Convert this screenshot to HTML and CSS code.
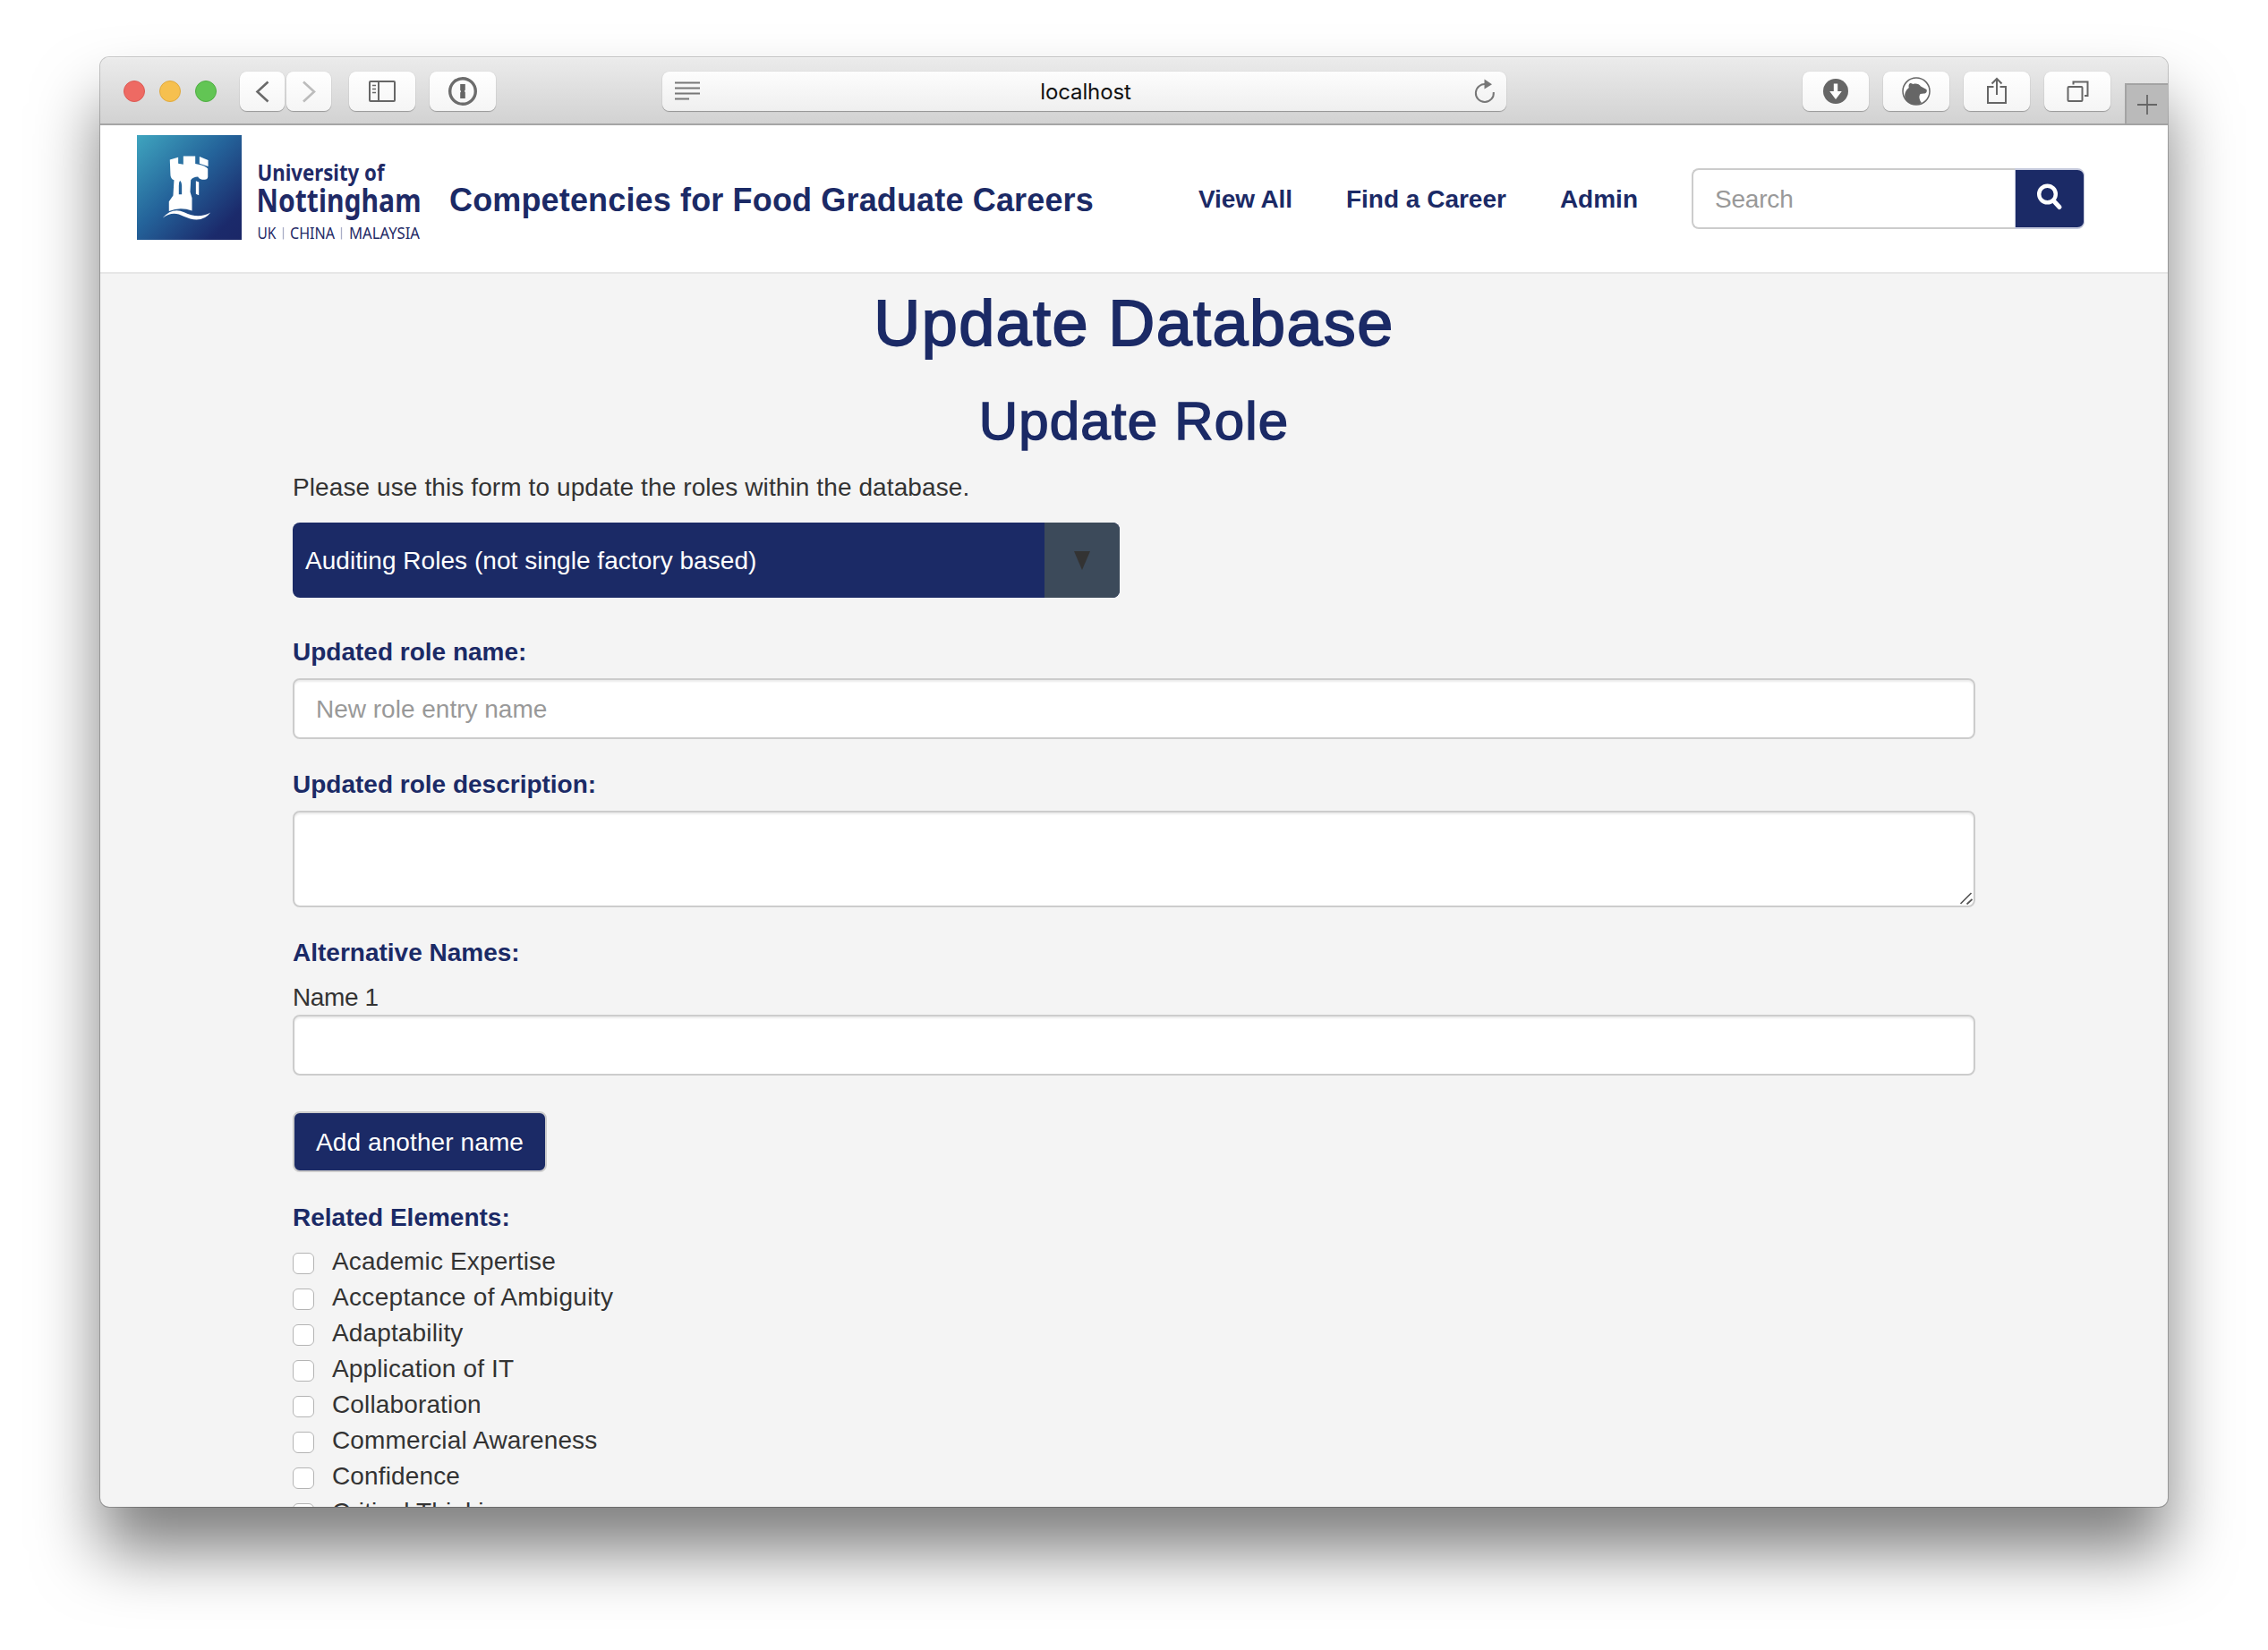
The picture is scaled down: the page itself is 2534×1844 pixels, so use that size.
FILE: index.html
```html
<!DOCTYPE html>
<html lang="en">
<head>
<meta charset="utf-8">
<title>Update Database</title>
<link rel="stylesheet" href="styles.css">
</head>
<body>
<div class="window">
  <div class="toolbar">
    <div class="lights"><span class="light red"></span><span class="light yellow"></span><span class="light green"></span></div>
    <div class="history">
      <span class="tool half"><svg width="50" height="44" viewBox="0 0 50 44"><path d="M31.500 11.500L19.500 22.500L31.500 33.500" fill="none" stroke="#6a6a6a" stroke-width="2.600"/></svg></span>
      <span class="tool half"><svg width="50" height="44" viewBox="0 0 50 44"><path d="M19 11.500L31 22.500L19 33.500" fill="none" stroke="#bcbcbc" stroke-width="2.600"/></svg></span>
    </div>
    <span class="tool sidebar"><svg width="74" height="44" viewBox="0 0 74 44" fill="none" stroke="#666" stroke-width="2"><rect x="23" y="11" width="28" height="22" rx="1"/><path d="M33 11V33"/><path d="M26 15.500h4M26 19.500h4M26 23.500h4" stroke-width="1.300"/></svg></span>
    <span class="tool onepass"><svg width="74" height="44" viewBox="0 0 74 44"><circle cx="37" cy="22" r="14.300" fill="none" stroke="#6c6c6c" stroke-width="3.400"/><path d="M34.200 14h5.600v6.500l-1 1.500l1 1v7h-5.600v-6.500l1-1.500l-1-1z" fill="#666"/></svg></span>
    <div class="address">
      <svg width="30" height="22" viewBox="0 0 30 22"><path d="M0 1.500h28M0 7.500h28M0 13.500h28M0 19.500h16" stroke="#777" stroke-width="2"/></svg>
      <span class="host">localhost</span>
      <svg width="24" height="28" viewBox="0 0 24 28"><path d="M13.500 6.200A10 10 0 1 0 21.800 15" fill="none" stroke="#777" stroke-width="2"/><path d="M11.500 0.500L20 6.200L11.500 11.500z" fill="#777"/></svg>
    </div>
    <div class="actions">
      <span class="tool"><svg width="74" height="44" viewBox="0 0 74 44"><circle cx="37" cy="22" r="14" fill="#666"/><path d="M34.800 13.500h4.400v8.500h4.600L37 31l-6.800-9h4.600z" fill="#fff"/></svg></span>
      <span class="tool"><svg width="74" height="44" viewBox="0 0 74 44"><circle cx="37" cy="22" r="15" fill="#fff" stroke="#666" stroke-width="1.500"/><path d="M25.500 31.500C22.500 26 25 21 28.800 18C28 15 29.300 12.500 31 13L33.500 14C37 13 40.500 14 42 16.500L48.500 20C49.500 22.500 48 24.500 45.500 24.500L41.500 25C39.500 28 40.500 31.500 43 35C37 38.500 29 37 25.500 31.500z" fill="#666"/></svg></span>
      <span class="tool"><svg width="74" height="44" viewBox="0 0 74 44" fill="none" stroke="#666" stroke-width="2"><path d="M33.500 17H27v18H47V17H40.500M37 26V8M31.500 13.500L37 8L42.500 13.500"/></svg></span>
      <span class="tool"><svg width="74" height="44" viewBox="0 0 74 44" fill="none" stroke="#666" stroke-width="2"><rect x="26.500" y="17" width="16" height="16" rx="1"/><path d="M32.500 14.500V11.500H48.500V27H45"/></svg></span>
    </div>
    <span class="newtab"><svg width="24" height="24" viewBox="0 0 24 24"><path d="M12 1V23M1 12H23" stroke="#666" stroke-width="1.800"/></svg></span>
  </div>

  <header class="navbar">
    <svg class="logo" width="320" height="126" viewBox="0 0 320 126">
      <defs>
        <linearGradient id="sky" x1="0" y1="0" x2="1" y2="1"><stop offset="0" stop-color="#3fa5bf"/><stop offset=".45" stop-color="#24639a"/><stop offset=".85" stop-color="#1b2a6b"/><stop offset="1" stop-color="#1b2767"/></linearGradient>
      </defs>
      <rect width="117" height="117" fill="url(#sky)"/>
      <g transform="scale(.3343)" fill="#fff">
        <path fill-rule="evenodd" d="M110 82L138 74V95L155 98V70H195V96L209 99Q228 103 237 112V140Q236 149 226 149Q208 149 204 139Q188 139 180 150L178 190L184 210V253Q145 238 107 254V222L121 202L124 150Q112 146 112 132zM144 152Q139 158 140 170V198H150V168Q150 158 144 152z"/>
        <path d="M209 72L238 84V105L209 95z"/>
        <path d="M197 153L207 157V201L197 197z"/>
        <path d="M86 277Q118 240 158 258Q205 282 246 259Q222 291 178 280Q158 273 140 265Q112 257 86 277z"/>
      </g>
      <g fill="#1f2a66" font-family="'Noto Sans', sans-serif" letter-spacing="0">
        <text x="134.500" y="50.500" font-size="25" font-weight="700" textLength="142" lengthAdjust="spacingAndGlyphs">University of</text>
        <text x="133.500" y="86" font-size="36" font-weight="700" textLength="184" lengthAdjust="spacingAndGlyphs">Nottingham</text>
        <g font-size="18" font-weight="400">
          <text x="134.500" y="116" textLength="21" lengthAdjust="spacingAndGlyphs">UK</text>
          <text x="171" y="116" textLength="50" lengthAdjust="spacingAndGlyphs">CHINA</text>
          <text x="237" y="116" textLength="79" lengthAdjust="spacingAndGlyphs">MALAYSIA</text>
        </g>
        <path d="M163.500 103v13.500M228.500 103v13.500" stroke="#a9adc6" stroke-width="1.300"/>
      </g>
    </svg>
    <div class="brand">Competencies for Food Graduate Careers</div>
    <nav class="links"><a>View All</a><a>Find a Career</a><a>Admin</a></nav>
    <div class="search">
      <div class="search-field">Search</div>
      <div class="search-button"><svg width="30" height="32" viewBox="0 0 30 32" fill="none" stroke="#fff"><circle cx="12.500" cy="13" r="9.300" stroke-width="4.400"/><path d="M19.500 20.500L26 27.500" stroke-width="5" stroke-linecap="round"/></svg></div>
    </div>
  </header>

  <main class="page">
    <h1>Update Database</h1>
    <h2>Update Role</h2>
    <p class="intro">Please use this form to update the roles within the database.</p>
    <div class="select"><span class="select-value">Auditing Roles (not single factory based)</span><span class="select-arrow"><svg width="18" height="21" viewBox="0 0 18 21"><path d="M0 0H18L9 21z" fill="#333"/></svg></span></div>

    <div class="group"><div class="label">Updated role name:</div><div class="field">New role entry name</div></div>
    <div class="group"><div class="label">Updated role description:</div><div class="field area"><svg width="16" height="16" viewBox="0 0 16 16"><path d="M1.500 14L13.500 2M8.500 14.500L14.500 9" stroke="#555" stroke-width="1.700"/></svg></div></div>
    <div class="group names"><div class="label">Alternative Names:</div><div class="caption">Name 1</div><div class="field"></div></div>
    <div class="button">Add another name</div>
    <div class="label">Related Elements:</div>
    <ul class="elements">
      <li><span class="box"></span>Academic Expertise</li>
      <li><span class="box"></span>Acceptance of Ambiguity</li>
      <li><span class="box"></span>Adaptability</li>
      <li><span class="box"></span>Application of IT</li>
      <li><span class="box"></span>Collaboration</li>
      <li><span class="box"></span>Commercial Awareness</li>
      <li><span class="box"></span>Confidence</li>
      <li><span class="box"></span>Critical Thinking</li>
    </ul>
  </main>
</div>
</body>
</html>
```
FILE: styles.css
```css
* { box-sizing: border-box; }
html, body { height: 100%; }
body {
  margin: 0;
  padding: 64px 112px 160px;
  background: #fff;
  overflow: hidden;
  color: #333;
  font: 28px/40px "Liberation Sans", Arial, sans-serif;
  letter-spacing: .1px;
}
svg { display: block; flex: none; }
.window {
  height: 1620px;
  display: flex;
  flex-direction: column;
  overflow: hidden;
  border-radius: 10px;
  background: #f4f4f4;
  box-shadow: 0 0 0 1px rgba(0, 0, 0, .22), 0 50px 72px rgba(0, 0, 0, .5);
}

/* browser toolbar */
.toolbar {
  flex: none;
  height: 76px;
  display: flex;
  align-items: center;
  padding-left: 26px;
  background: linear-gradient(#ebebeb, #d2d2d2);
  border-top: 1px solid #f5f5f5;
  border-bottom: 2px solid #a5a5a5;
}
.lights { display: flex; gap: 16px; }
.light { width: 24px; height: 24px; border-radius: 50%; }
.red { background: #ee6a63; border: 1px solid #dc5a54; }
.yellow { background: #f6c04f; border: 1px solid #e0aa3e; }
.green { background: #62c554; border: 1px solid #4fae43; }
.history { display: flex; gap: 2px; margin-left: 26px; }
.tool {
  width: 74px;
  height: 44px;
  border-radius: 8px;
  background: linear-gradient(#fff, #f5f5f5);
  box-shadow: 0 1px 1px rgba(0, 0, 0, .28), 0 0 1px rgba(0, 0, 0, .2);
}
.half { width: 50px; }
.sidebar { margin-left: 20px; }
.onepass { margin-left: 16px; }
.address {
  width: 943px;
  height: 44px;
  margin-left: 186px;
  padding: 0 12px 0 14px;
  display: flex;
  align-items: center;
  justify-content: space-between;
  border-radius: 8px;
  background: linear-gradient(#fdfdfd, #efefef);
  box-shadow: 0 1px 1px rgba(0, 0, 0, .3), 0 0 1px rgba(0, 0, 0, .2);
}
.host { padding: 3px 5px 0 0; color: #111; font: 24px/44px Inter, sans-serif; letter-spacing: -.1px; }
.actions { display: flex; gap: 16px; margin-left: 331px; }
.newtab {
  align-self: flex-end;
  width: 48px;
  height: 47px;
  margin: 0 0 -2px auto;
  display: grid;
  place-items: center;
  background: #bababa;
  border: 2px solid #a3a3a3;
  border-right: 0;
}

/* site header */
.navbar {
  flex: none;
  height: 166px;
  display: flex;
  align-items: flex-start;
  padding: 11px 93px 0 41px;
  background: #fff;
  border-bottom: 2px solid #e6e6e6;
  color: #1b2a66;
  font-weight: 700;
}
.brand { margin: 52px 0 0 29px; font-size: 36px; line-height: 42px; letter-spacing: .15px; white-space: nowrap; }
.links { display: flex; gap: 60px; margin: 52px 0 0 auto; letter-spacing: 0; white-space: nowrap; }
.links a:first-child { letter-spacing: -.1px; }
.search { display: flex; margin: 37px 0 0 60px; font-weight: 400; }
.search-field {
  width: 361px;
  height: 68px;
  padding: 13px 24px 11px;
  border: 2px solid #ccc;
  border-right: 0;
  border-radius: 8px 0 0 8px;
  color: #999;
  letter-spacing: -.2px;
}
.search-button {
  width: 78px;
  height: 68px;
  padding: 14px 0 0 23px;
  border: 2px solid #c5c9dc;
  border-width: 2px 1px;
  border-radius: 0 8px 8px 0;
  background: #1b2a66;
}

/* form */
.page { padding: 16px 215px 0; }
h1, h2 { margin: 0; text-align: center; color: #1b2a66; font-weight: 400; }
h1 { font-size: 72px; line-height: 79px; letter-spacing: 1.4px; -webkit-text-stroke: 1.800px #1b2a66; }
h2 { margin-top: 37px; font-size: 60px; line-height: 66px; letter-spacing: 1.2px; -webkit-text-stroke: 1.500px #1b2a66; }
.intro { margin: 21px 0 19px; }
.select {
  display: flex;
  width: 924px;
  height: 84px;
  margin-bottom: 41px;
  border-radius: 8px;
  overflow: hidden;
  background: #1b2a66;
  color: #fff;
  letter-spacing: .04px;
}
.select-value { flex: 1; padding: 23px 14px 21px; }
.select-arrow { width: 84px; padding: 32px 0 0 33px; background: #3c4a5a; }
.group { margin-bottom: 31px; }
.label { margin-bottom: 9px; color: #1b2a66; font-weight: 700; letter-spacing: 0; }
.caption { margin-bottom: -1px; padding-top: 1px; letter-spacing: -.4px; }
.field {
  height: 68px;
  padding: 13px 24px 11px;
  border: 2px solid #ccc;
  border-radius: 8px;
  background: #fff;
  box-shadow: inset 0 2px 2px rgba(0, 0, 0, .075);
  color: #999;
  letter-spacing: 0;
}
.names { margin-bottom: 40px; }
.area { height: 108px; display: flex; justify-content: flex-end; align-items: flex-end; padding: 0; }
.button {
  width: 284px;
  height: 68px;
  margin-bottom: 31px;
  padding: 13px 0 11px 24px;
  border: 2px solid #ccc;
  border-radius: 8px;
  background: #1b2a66;
  color: #fff;
  white-space: nowrap;
}
.elements { margin: 0; padding: 0; list-style: none; }
.elements li { display: flex; gap: 20px; letter-spacing: .14px; }
.elements li:nth-child(2) { letter-spacing: .33px; }
.box {
  width: 24px;
  height: 24px;
  margin-top: 10px;
  border: 1.500px solid #b4b4b4;
  border-radius: 6px;
  background: #fff;
}
```
